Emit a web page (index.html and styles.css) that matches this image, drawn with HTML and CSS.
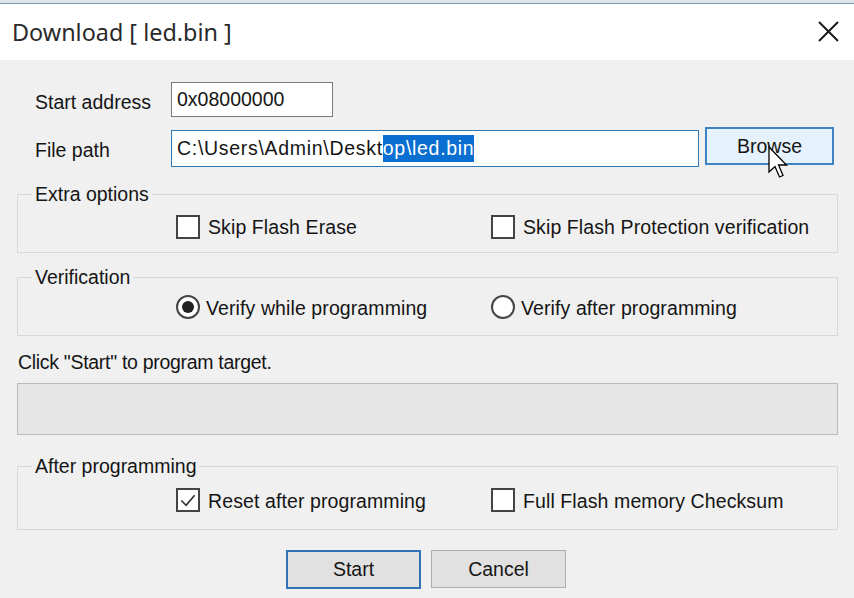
FILE: index.html
```html
<!DOCTYPE html>
<html>
<head>
<meta charset="utf-8">
<link rel="stylesheet" href="styles.css">
</head>
<body>
<div class="window">
  <div class="topstrip"></div>
  <div class="titlebar">
    <span class="title">Download [ led.bin ]</span>
    <svg class="close" width="21" height="21" viewBox="0 0 21 21"><path d="M1 1 L20 20 M20 1 L1 20" stroke="#1a1a1a" stroke-width="2" fill="none"/></svg>
  </div>
  <div class="content">
    <div class="row row-addr">
      <span class="label">Start address</span>
      <div class="input input-addr">0x08000000</div>
    </div>
    <div class="row row-path">
      <span class="label">File path</span>
      <div class="input input-path">C:\Users\Admin\Deskt<span class="sel">op\led.bin</span></div>
      <button class="btn btn-browse">Browse</button>
    </div>

    <div class="group group-extra">
      <div class="group-title">Extra options</div>
      <div class="opts opts-extra">
        <label class="opt"><span class="box"></span><span class="opt-text">Skip Flash Erase</span></label>
        <label class="opt"><span class="box"></span><span class="opt-text">Skip Flash Protection verification</span></label>
      </div>
    </div>

    <div class="group group-verify">
      <div class="group-title">Verification</div>
      <div class="opts opts-verify">
        <label class="opt"><span class="radio on"></span><span class="opt-text radio-text">Verify while programming</span></label>
        <label class="opt"><span class="radio"></span><span class="opt-text radio-text">Verify after programming</span></label>
      </div>
    </div>

    <div class="status">Click "Start" to program target.</div>
    <div class="progress"></div>

    <div class="group group-after">
      <div class="group-title">After programming</div>
      <div class="opts opts-after">
        <label class="opt"><span class="box"><svg width="21" height="21" viewBox="0 0 21 21"><polyline points="3.5,10.5 8.5,15.5 17.5,5" fill="none" stroke="#333" stroke-width="1.8"/></svg></span><span class="opt-text">Reset after programming</span></label>
        <label class="opt"><span class="box"></span><span class="opt-text">Full Flash memory Checksum</span></label>
      </div>
    </div>

    <div class="buttons">
      <button class="btn btn-start">Start</button>
      <button class="btn btn-cancel">Cancel</button>
    </div>
  </div>
  <svg class="cursor" width="21" height="33" viewBox="0 0 21 33"><path d="M1 1 L1 26 L7 20.5 L11.5 31 L15 29.5 L10.5 19 L18.5 19 Z" fill="#fff" stroke="#000" stroke-width="1.3" stroke-linejoin="miter"/></svg>
</div>
</body>
</html>
```
FILE: styles.css
```css
html, body {
  margin: 0;
  padding: 0;
  background: #f0f0f0;
}
.window {
  position: relative;
  width: 854px;
  height: 598px;
  background: #f0f0f0;
  font-family: "Liberation Sans", Arial, sans-serif;
  font-size: 19.5px;
  color: #151515;
  overflow: hidden;
}
.topstrip {
  height: 3px;
  background: #dfe5ec;
  border-bottom: 1px solid #7d97b3;
}
.titlebar {
  height: 56px;
  background: #ffffff;
  display: flex;
  align-items: center;
  justify-content: space-between;
  padding: 0 15px 0 12px;
}
.title {
  font-family: "Noto Sans", "Open Sans", sans-serif;
  font-size: 23.4px;
  color: #2a2a2a;
  margin-top: -1px;
}
.close {
  display: block;
  margin-top: -2px;
}
.content {
  padding: 0 16px 0 17px;
}
.row {
  display: flex;
  align-items: flex-start;
  padding-left: 18px;
}
.row-addr {
  margin-top: 22px;
  height: 35px;
}
.row-path {
  margin-top: 13px;
  height: 37px;
}
.label {
  width: 136px;
  flex: none;
  line-height: 35px;
  padding-top: 3px;
}
.row-path .label {
  line-height: 37px;
  padding-top: 2px;
}
.input {
  box-sizing: border-box;
  background: #fff;
  display: flex;
  align-items: center;
  white-space: nowrap;
}
.input-addr {
  width: 162px;
  height: 35px;
  border: 1px solid #7a7a7a;
  padding-left: 5px;
}
.input-path {
  width: 528px;
  height: 37px;
  border: 1px solid #2f79b8;
  padding-left: 5px;
  letter-spacing: 0.7px;
}
.sel {
  background: #0a6fd0;
  color: #fff;
  line-height: 27px;
}
.btn {
  box-sizing: border-box;
  font-family: "Liberation Sans", Arial, sans-serif;
  font-size: 19.5px;
  color: #151515;
  background: #e1e1e1;
  border: 1px solid #adadad;
  padding: 0;
  margin: 0;
}
.btn-browse {
  margin: -3px 0 0 6px;
  width: 129px;
  height: 38px;
  background: #e5f1fb;
  border: 2px solid #3f84c2;
}
.group {
  border: 1px solid #d8d8d8;
}
.group-title {
  display: block;
  width: fit-content;
  margin: -12px 0 0 14px;
  padding: 0 3px;
  line-height: 22px;
  background: #f0f0f0;
}
.group-extra {
  margin-top: 27px;
  padding-bottom: 13px;
}
.group-verify {
  margin-top: 24px;
  padding-bottom: 16px;
}
.group-after {
  margin-top: 31px;
  padding-bottom: 17px;
}
.opts {
  display: grid;
  grid-template-columns: 315px auto;
  padding-left: 158px;
}
.opts-extra { margin-top: 10px; }
.opts-verify { margin-top: 7px; }
.opts-after { margin-top: 11px; }
.opt {
  display: flex;
  align-items: center;
  height: 24px;
}
.opts-after .opt-text {
  padding-top: 3px;
}
.box {
  box-sizing: border-box;
  width: 24px;
  height: 24px;
  border: 2px solid #444;
  background: #fff;
  flex: none;
  display: flex;
  align-items: center;
  justify-content: center;
}
.box svg { display: block; }
.opt-text {
  margin-left: 8px;
  letter-spacing: 0.1px;
}
.radio {
  box-sizing: border-box;
  width: 24px;
  height: 24px;
  border: 2px solid #444;
  border-radius: 50%;
  background: #fff;
  flex: none;
  display: flex;
  align-items: center;
  justify-content: center;
}
.radio.on::after {
  content: "";
  width: 12px;
  height: 12px;
  border-radius: 50%;
  background: #222;
}
.radio-text {
  margin-left: 6px;
  padding-top: 2px;
}
.status {
  margin-top: 15px;
  padding-left: 1px;
  line-height: 22px;
  letter-spacing: -0.3px;
}
.progress {
  box-sizing: border-box;
  margin-top: 10px;
  height: 52px;
  background: #e6e6e6;
  border: 1px solid #bcbcbc;
}
.buttons {
  display: flex;
  justify-content: center;
  gap: 10px;
  margin-top: 20px;
  padding-right: 3px;
}
.btn-start {
  width: 135px;
  height: 39px;
  border: 2px solid #2f73b6;
}
.btn-cancel {
  width: 135px;
  height: 38px;
}
.cursor {
  position: absolute;
  left: 768px;
  top: 146px;
}
```
